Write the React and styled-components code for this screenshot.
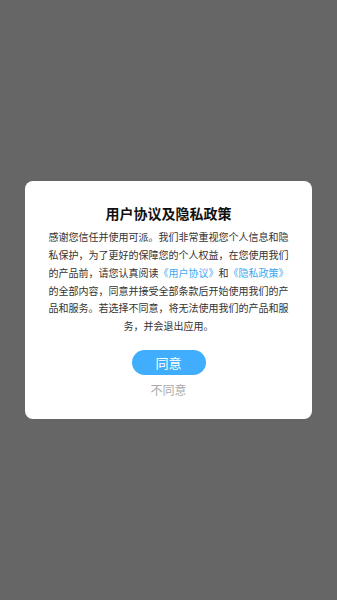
import React from 'react';
import styled, { createGlobalStyle } from 'styled-components';

const GlobalStyle = createGlobalStyle`
  html, body {
    margin: 0;
    padding: 0;
    background: #666666;
  }
  body {
    font-family: "Noto Sans CJK SC", "Noto Sans", sans-serif;
  }
`;

const Overlay = styled.div`
  width: 337px;
  height: 600px;
  background: #666666;
  display: flex;
  align-items: center;
  justify-content: center;
`;

const Dialog = styled.div`
  width: 287px;
  box-sizing: border-box;
  background: #ffffff;
  border-radius: 8px;
  padding: 22px 0 20px;
  display: flex;
  flex-direction: column;
  align-items: center;
`;

const Title = styled.h2`
  margin: 0;
  font-size: 14px;
  line-height: 20px;
  font-weight: 700;
  color: #111111;
`;

const Body = styled.p`
  margin: 5px 0 0;
  width: 240px;
  font-size: 10px;
  line-height: 17.8px;
  color: #333333;
  text-align: center;
`;

const Link = styled.span`
  color: #3ea8f2;
`;

const AgreeButton = styled.button`
  margin-top: 15px;
  width: 74px;
  height: 25px;
  border: 0;
  border-radius: 13px;
  background: #40aefc;
  color: #ffffff;
  font-family: inherit;
  font-size: 13px;
  cursor: pointer;
`;

const DeclineButton = styled.button`
  margin-top: 6px;
  border: 0;
  background: none;
  padding: 0;
  color: #aaaaaa;
  font-family: inherit;
  font-size: 12px;
  line-height: 18px;
  cursor: pointer;
`;

const App = () => (
  <>
    <GlobalStyle />
    <Overlay>
      <Dialog>
        <Title>用户协议及隐私政策</Title>
        <Body>
          感谢您信任并使用可派。我们非常重视您个人信息和隐私保护，为了更好的保障您的个人权益，在您使用我们的产品前，请您认真阅读
          <Link>《用户协议》</Link>和<Link>《隐私政策》</Link>
          的全部内容，同意并接受全部条款后开始使用我们的产品和服务。若选择不同意，将无法使用我们的产品和服务，并会退出应用。
        </Body>
        <AgreeButton>同意</AgreeButton>
        <DeclineButton>不同意</DeclineButton>
      </Dialog>
    </Overlay>
  </>
);

export default App;
